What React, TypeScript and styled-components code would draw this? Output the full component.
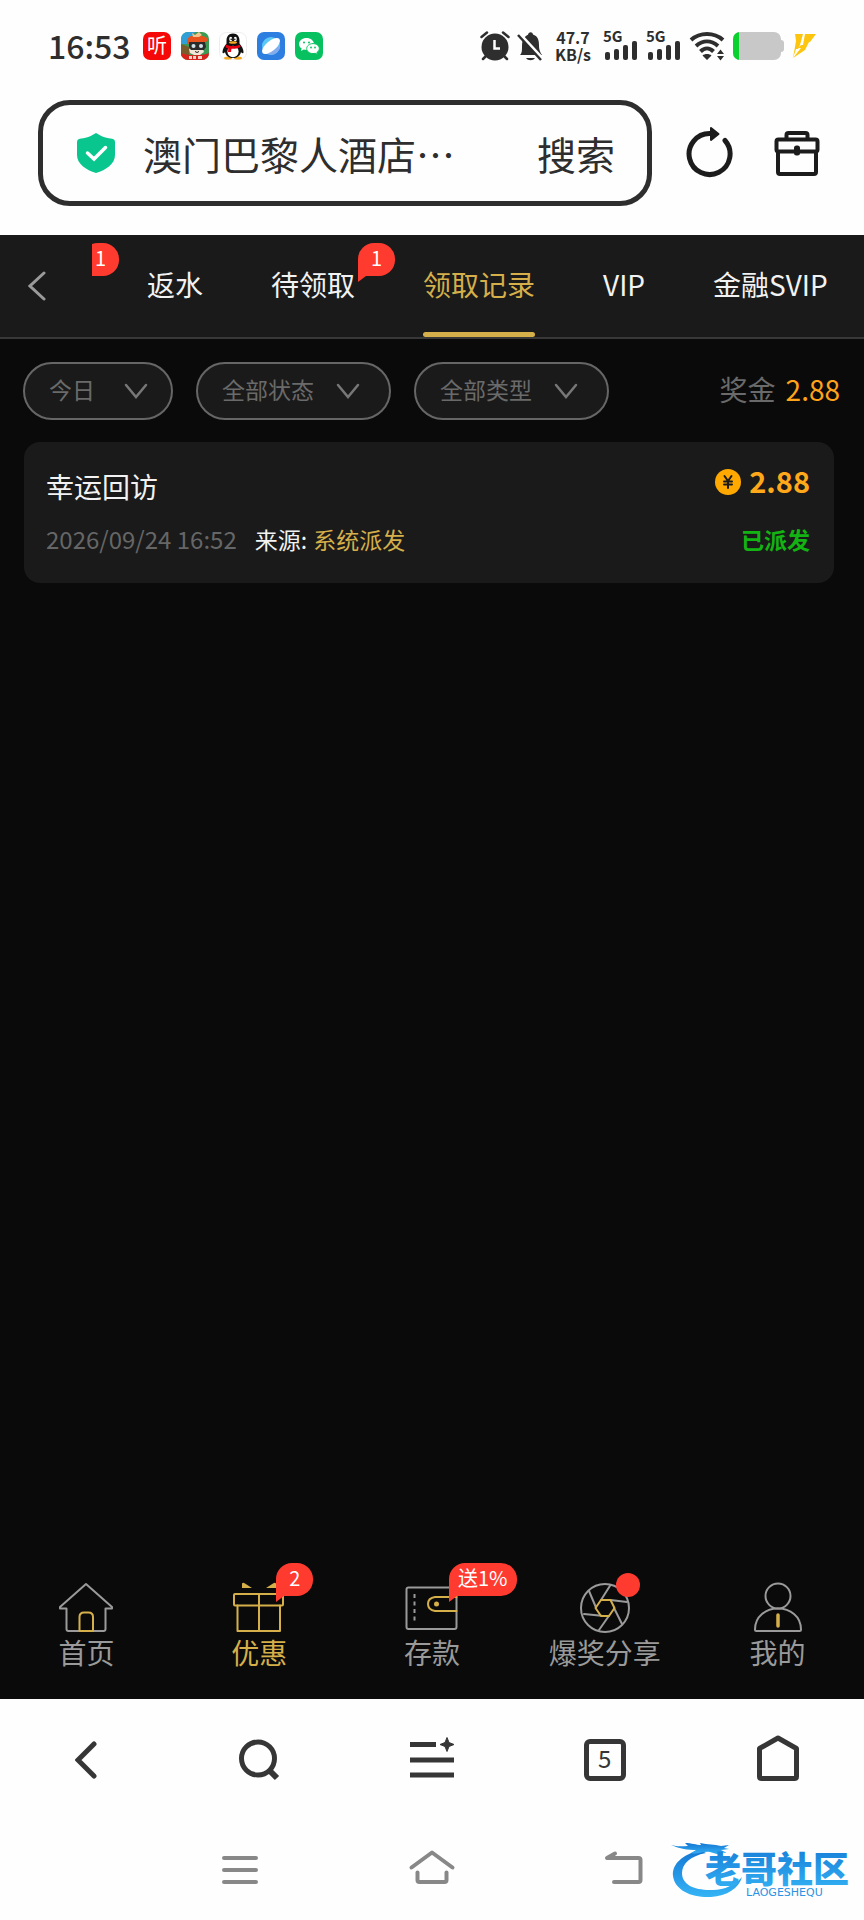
import React from "react";
import styled, { createGlobalStyle, css } from "styled-components";

const ink = "#2e2e2e";
const gold = "#d4af4a";
const grey = "#9a9a9a";
const red = "#ff3b30";

const GlobalStyle = createGlobalStyle`
  * { box-sizing: border-box; }
  body {
    margin: 0;
    background: #fefefe;
    font-family: "Noto Sans CJK SC", "Noto Sans", sans-serif;
  }
  button, input, select { font: inherit; color: inherit; }
  button { padding: 0; border: 0; background: none; cursor: pointer; }
  a { color: inherit; text-decoration: none; }
  svg { display: block; flex: none; }
`;

const Page = styled.div`
  position: relative;
  display: flex;
  flex-direction: column;
  min-height: 100vh;
`;

/* ---------- phone status bar ---------- */

const StatusBar = styled.header`
  display: flex;
  align-items: center;
  justify-content: space-between;
  height: 92px;
  padding: 0 48px;
  color: ${ink};
`;

const StatusGroup = styled.div<{ $gap: number }>`
  display: flex;
  align-items: center;
  gap: ${(p) => p.$gap}px;
`;

const Clock = styled.time`
  margin-right: 2px;
  padding-bottom: 2px;
  font-size: 32px;
  font-weight: 500;
  line-height: 32px;
`;

const Speed = styled.div`
  margin: 0 5px;
  font-size: 16px;
  font-weight: 700;
  line-height: 17px;
  text-align: center;
`;

/* ---------- browser address bar ---------- */

const AddressBar = styled.form`
  display: flex;
  align-items: center;
  padding: 8px 44px 29px 38px;
  color: ${ink};
`;

const AddressBox = styled.div`
  display: flex;
  flex: 1;
  align-items: center;
  min-width: 0;
  height: 106px;
  margin-right: 34px;
  padding: 0 32px 0 34px;
  border: 5px solid ${ink};
  border-radius: 32px;
  font-size: 39px;
`;

const AddressInput = styled.input`
  flex: 1;
  min-width: 0;
  height: 60px;
  padding: 0;
  margin-left: 28px;
  border: 0;
  outline: 0;
  background: none;
`;

const SearchButton = styled.button`
  height: 60px;
  line-height: 60px;
`;

const ToolboxButton = styled.button`
  margin-left: 40px;
`;

/* ---------- site tabs ---------- */

const TabBar = styled.nav`
  display: flex;
  height: 104px;
  border-bottom: 2px solid #383838;
  background: #1a1a1a;
  color: #f2f2f2;
`;

const BackButton = styled.button`
  display: flex;
  align-items: center;
  width: 92px;
  padding-left: 28px;
`;

const TabScroller = styled.div`
  flex: 1;
  min-width: 0;
  overflow: hidden;
`;

const TabList = styled.div`
  display: flex;
  gap: 68px;
  height: 100%;
  margin-left: -13px;
`;

const Tab = styled.a<{ $active?: boolean }>`
  position: relative;
  flex: none;
  font-size: 28px;
  line-height: 98px;
  white-space: nowrap;
  ${(p) =>
    p.$active &&
    css`
      color: ${gold};
      &::after {
        content: "";
        position: absolute;
        right: 0;
        bottom: 0;
        left: 0;
        height: 5px;
        border-radius: 3px;
        background: ${gold};
      }
    `}
`;

const Bubble = styled.span<{ $place: "tab" | "nav" }>`
  position: absolute;
  top: ${(p) => (p.$place === "tab" ? 8 : 0)}px;
  left: ${(p) => (p.$place === "tab" ? "calc(100% + 3px)" : "calc(50% + 17px)")};
  min-width: 37px;
  height: 33px;
  padding: 0 9px;
  border-radius: 16px 16px 16px 0;
  background: ${red};
  color: #fff;
  font-size: 20px;
  line-height: 30px;
  text-align: center;
  white-space: nowrap;
  &::after {
    content: "";
    position: absolute;
    top: 100%;
    left: 0;
    border-top: 6px solid ${red};
    border-right: 8px solid transparent;
  }
`;

/* ---------- records ---------- */

const Main = styled.main`
  flex: 1;
  background: #0a0a0a;
`;

const Filters = styled.div`
  display: flex;
  align-items: center;
  gap: 23px;
  padding: 23px 24px 22px 23px;
`;

const FilterPill = styled.div<{ $width: number }>`
  position: relative;
  flex: 0 1 ${(p) => p.$width}px;
  color: #6a6a6a;
`;

const FilterSelect = styled.select`
  display: block;
  width: 100%;
  height: 58px;
  padding: 0 24px 4px;
  border: 2px solid #666;
  border-radius: 29px;
  background: #1a1a1a;
  font-size: 23px;
  appearance: none;
`;

const FilterArrow = styled.svg<{ $inset: number }>`
  position: absolute;
  top: 21px;
  right: ${(p) => p.$inset}px;
  pointer-events: none;
`;

const Total = styled.p`
  margin: 0 0 0 auto;
  padding-bottom: 4px;
  color: #6a6a6a;
  font-size: 28px;
  line-height: 40px;
  white-space: nowrap;
`;

const TotalValue = styled.span`
  margin-left: 10px;
  color: #ffa31a;
`;

const Card = styled.article`
  display: grid;
  gap: 11px;
  margin: 0 30px 0 24px;
  padding: 20px 24px 24px 22px;
  border-radius: 16px;
  background: #1a1a1a;
`;

const CardRow = styled.div`
  display: flex;
  justify-content: space-between;
  color: #f2f2f2;
`;

const CardTitle = styled.h2`
  margin: 4px 0 2px;
  font-size: 28px;
  font-weight: 400;
  line-height: 40px;
`;

const Amount = styled.div`
  display: flex;
  align-items: center;
  gap: 8px;
  height: 40px;
  color: #ffa81a;
  font-size: 29px;
  font-weight: 700;
  line-height: 36px;
`;

const AmountValue = styled.span`
  padding-bottom: 4px;
`;

const Detail = styled.div`
  display: flex;
  font-size: 23px;
  line-height: 40px;
  white-space: nowrap;
`;

const Stamp = styled.time`
  margin-right: 18px;
  color: #666;
  font-size: 24px;
`;

const Source = styled.span`
  margin-left: 6px;
  color: ${gold};
`;

const State = styled.strong`
  color: #12b312;
  font-size: 23px;
  line-height: 40px;
`;

/* ---------- site bottom navigation ---------- */

const SiteNav = styled.nav`
  display: grid;
  grid-template-columns: repeat(5, 1fr);
  height: 136px;
  background: #0a0a0a;
`;

const SiteNavItem = styled.a<{ $active?: boolean }>`
  position: relative;
  display: flex;
  flex-direction: column;
  align-items: center;
  padding-top: 17px;
  color: ${(p) => (p.$active ? gold : grey)};
  font-size: 28px;
  line-height: 36px;
`;

const Dot = styled.span`
  position: absolute;
  top: 10px;
  left: calc(50% + 11px);
  width: 24px;
  height: 24px;
  border-radius: 50%;
  background: ${red};
`;

/* ---------- browser toolbar and system keys ---------- */

const Toolbar = styled.div`
  display: grid;
  grid-template-columns: repeat(5, 1fr);
  height: 121px;
  color: #363636;
`;

const ToolButton = styled.button`
  display: flex;
  align-items: center;
  justify-content: center;
`;

const TabCount = styled.span`
  width: 42px;
  height: 42px;
  border: 5px solid currentColor;
  border-radius: 6px;
  font-size: 24px;
  line-height: 28px;
`;

const SystemKeys = styled.div`
  display: flex;
  align-items: center;
  justify-content: center;
  gap: 144px;
  height: 100px;
  color: #888;
`;

const Watermark = styled.div`
  position: absolute;
  right: 13px;
  bottom: 19px;
  width: 180px;
  height: 60px;
`;

const lineArt = { fill: "none", strokeWidth: 2, strokeLinejoin: "round", strokeLinecap: "round" } as const;

const AppIcons = () => (
  <StatusGroup $gap={10}>
    <svg width="28" height="36" viewBox="0 -4 28 36">
      <rect width="28" height="28" rx="7" fill="#f40808" />
      <text x="14" y="21" textAnchor="middle" fontSize="20" fill="#fff">听</text>
    </svg>
    <svg width="28" height="28" viewBox="0 0 28 28">
      <clipPath id="game"><rect width="28" height="28" rx="7" /></clipPath>
      <g clipPath="url(#game)">
        <rect width="28" height="28" fill="#3b9a54" />
        <path d="M0 0h14L8 12H0z" fill="#2f9fd6" />
        <path d="M0 12l8 3v10H0z" fill="#7b5a2c" />
        <path d="M6 11C6 3 12 3 14 5c3-3 10-1 13 2l-3 5H7z" fill="#e8521c" />
        <path d="M11 1l3 2 4-3 3 3-3 2h-6z" fill="#f5c28a" />
        <path d="M8 17l6 1 8-1 1 3-4 3h-6l-4-2z" fill="#f4e6d8" />
        <path d="M8 10h16l1 5-2 3H10l-2-3z" fill="#2b2a2a" />
        <circle cx="12.500" cy="14" r="2" fill="#cfe2e8" />
        <circle cx="20" cy="14" r="2" fill="#cfe2e8" />
        <path d="M14 19.500l2 1 2-1" stroke="#222" fill="none" />
        <path d="M0 21c6 3 22 3 28 0v7H0z" fill="#d8201c" />
        <path d="M8 24h3v3H8zM12 24h3v3h-3zM17 24h4v3h-4z" fill="#f6d4c8" />
      </g>
    </svg>
    <svg width="28" height="28" viewBox="0 0 28 28">
      <rect x=".5" y=".5" width="27" height="27" rx="7" fill="#fff" stroke="#ededed" />
      <ellipse cx="9" cy="26" rx="4" ry="1.6" fill="#f7a823" />
      <ellipse cx="19" cy="26" rx="4" ry="1.6" fill="#f7a823" />
      <path d="M14 1.5c-4.500 0-6.500 3.300-6.500 7v3C5.500 14 3.500 17 3.500 20c0 2 1.500 1.500 2.500 0 1 4 4 6 8 6s7-2 8-6c1 1.500 2.500 2 2.500 0 0-3-2-6-4-8.500v-3c0-3.700-2-7-6.500-7z" fill="#111" />
      <ellipse cx="14" cy="19.500" rx="5.600" ry="5.700" fill="#fff" />
      <ellipse cx="11.700" cy="7" rx="1.500" ry="2.200" fill="#fff" />
      <ellipse cx="16.300" cy="7" rx="1.500" ry="2.200" fill="#fff" />
      <circle cx="12.200" cy="7.200" r=".8" /><circle cx="15.800" cy="7.200" r=".8" />
      <ellipse cx="14" cy="10.500" rx="4" ry="1.300" fill="#f7a823" />
      <path d="M7 12.500c4 2 10 2 14 0l.5 2.500c-3 1.500-6 2-9 1.800l-.5 3.200H9l.3-3.600-2.600-1z" fill="#e60012" />
    </svg>
    <svg width="28" height="28" viewBox="0 0 28 28">
      <rect width="28" height="28" rx="7" fill="#2c7fe0" />
      <circle cx="14" cy="14" r="9" fill="#5cc8f5" />
      <path d="M23 12a9 9 0 0 1-14 9c6-1 11-4 14-9z" fill="#86abec" />
      <ellipse cx="14" cy="14" rx="11" ry="5" fill="#fff" transform="rotate(-40 14 14)" />
    </svg>
    <svg width="28" height="28" viewBox="0 0 28 28">
      <rect width="28" height="28" rx="7" fill="#07c160" />
      <path d="M11.500 6C7.400 6 4 8.700 4 12c0 1.900 1 3.500 2.700 4.600L6 19l2.800-1.400c.9.300 1.800.4 2.700.4C15.600 18 19 15.300 19 12s-3.400-6-7.500-6z" fill="#fff" />
      <path d="M18 11.600c-3.500 0-6.300 2.200-6.300 5s2.800 5 6.300 5c.8 0 1.500-.1 2.200-.3l2.300 1.200-.6-2c1.400-.9 2.400-2.300 2.400-3.900 0-2.800-2.800-5-6.300-5z" fill="#fff" stroke="#07c160" strokeWidth="1" />
      <g fill="#07c160"><circle cx="9" cy="10.500" r="1" /><circle cx="14" cy="10.500" r="1" /><circle cx="16" cy="15.500" r=".9" /><circle cx="20" cy="15.500" r=".9" /></g>
    </svg>
  </StatusGroup>
);

const Signal = () => (
  <svg width="36" height="46" viewBox="0 -8 36 46" fill="currentColor">
    <text x="0" y="11" fontSize="15" fontWeight="700">5G</text>
    <rect x="2" y="21" width="5" height="8" rx="2" />
    <rect x="11" y="18" width="5" height="11" rx="2" />
    <rect x="20" y="14" width="5" height="15" rx="2" />
    <rect x="29" y="10" width="5" height="19" rx="2" />
  </svg>
);

const StatusIcons = () => (
  <StatusGroup $gap={7}>
    <svg width="30" height="30" viewBox="0 0 30 30" fill="none" stroke="currentColor" strokeLinecap="round">
      <circle cx="15" cy="16" r="13.500" fill="currentColor" stroke="none" />
      <path d="M1.500 6L7 1.500M28.500 6L23 1.500M6 25l-3 3M24 25l3 3" strokeWidth="2.500" />
      <path d="M14.500 9v8.500H20" stroke="#fff" strokeWidth="2.500" strokeLinecap="butt" />
    </svg>
    <svg width="26" height="30" viewBox="0 0 26 30">
      <path d="M3 24c2-2 2-4 2-9 0-6 2-9 6-11.200C11.400.300 15.600.300 16 3.500c4.500 1.500 6 5 6 10.500 0 5 1 7 3 10z" fill="currentColor" />
      <path d="M9 27h9c-2 3-7 3-9 0z" fill="currentColor" />
      <path d="M2 2l24 26" stroke="#fff" strokeWidth="3" />
      <path d="M1 4l23 25" stroke="currentColor" strokeWidth="2.500" />
    </svg>
    <Speed>47.7<br />KB/s</Speed>
    <Signal />
    <Signal />
    <svg width="37" height="30" viewBox="0 0 37 30" fill="none" stroke="currentColor" strokeWidth="4">
      <path d="M2 9C11 1 25 1 34 9M7 15c7-6 15-6 22 0M11.500 20.500c4-4 9-4 13 0" />
      <path d="M18 29l-4.500-4.500c2-2 7-2 9 0z M31.500 18.500l3.500 4.500h-7z M31.500 29.500l3.500-4.500h-7z" fill="currentColor" stroke="none" />
    </svg>
    <svg width="52" height="30" viewBox="0 0 52 30">
      <clipPath id="cell"><rect y="1" width="48" height="28" rx="7" /></clipPath>
      <rect x="44" y="9" width="7" height="12" rx="3" fill="#c8c8c8" />
      <g clipPath="url(#cell)">
        <rect y="1" width="48" height="28" fill="#c8c8c8" />
        <rect y="1" width="6" height="28" fill="#0bd12f" />
      </g>
    </svg>
    <svg width="24" height="26" viewBox="0 0 24 26">
      <path d="M3 1h8L8 12l-2 4h-2L1 25 4 8z" fill="#fdc50d" />
      <path d="M13 1h11l-6 8h-1l-4 8L1 25l8-10h-3l3-3h2z" fill="#fdc50d" />
    </svg>
  </StatusGroup>
);

const tabs: { label?: string; badge?: string; active?: boolean }[] = [
  { label: "返水" },
  { label: "待领取", badge: "1" },
  { label: "领取记录", active: true },
  { label: "VIP" },
  { label: "金融SVIP" },
];

const filters = [
  { name: "date", label: "今日", width: 150, inset: 25 },
  { name: "state", label: "全部状态", width: 195, inset: 31 },
  { name: "type", label: "全部类型", width: 195, inset: 31 },
];

const navItems: { label: string; badge?: string; dot?: boolean; active?: boolean; art: React.ReactNode }[] = [
  {
    label: "首页",
    art: (
      <>
        <path d="M28 4L2 27v1.500h6.500V49q0 2 2 2h35q2 0 2-2V28.500H54V27z" stroke={grey} />
        <path d="M21.500 51V37q0-4.500 4.500-4.500h4.500q4.500 0 4.500 4.500v14z" stroke={gold} />
      </>
    ),
  },
  {
    label: "优惠",
    badge: "2",
    active: true,
    art: (
      <g stroke={gold}>
        <rect x="3" y="14" width="49" height="11.500" rx="1" />
        <path d="M6.500 25.500V51h42.500V25.500M28 14v37" />
        <path d="M11 3.500q1-1.500 3 0L21 8H11zM45 3.500q-1-1.500-3 0L35 8h10z" fill={gold} stroke="none" />
      </g>
    ),
  },
  {
    label: "存款",
    badge: "送1%",
    art: (
      <>
        <rect x="2.500" y="7.500" width="50" height="41.500" rx="2" stroke={grey} />
        <path d="M10.500 14v28" stroke={grey} strokeDasharray="4 3.500" strokeLinecap="butt" />
        <path d="M52.500 17H31q-7 1-7 7t7 7h21.500" stroke={gold} />
        <circle cx="32.500" cy="24" r="2.500" fill={gold} stroke="none" />
      </>
    ),
  },
  {
    label: "爆奖分享",
    dot: true,
    art: (
      <>
        <circle cx="28" cy="28" r="24" stroke={grey} />
        <path d="M33.500 5L24 20M12 11l7 16.500M7 34l17.500 1.700M22 50l10-14.300M45 44L37 28M50 22l-16.500-2" stroke={grey} />
        <path d="M18.500 28l5.500-8h9.500l4 8-5.500 8h-8z" stroke={gold} />
      </>
    ),
  },
  {
    label: "我的",
    art: (
      <>
        <circle cx="28" cy="16" r="12.500" stroke={grey} />
        <path d="M5 49.500C5 36 16 28.500 28 28.500S51 36 51 49.500q0 1.500-1.500 1.500h-43Q5 51 5 49.500z" stroke={grey} />
        <path d="M28 35v11" stroke={gold} strokeWidth="3.500" />
      </>
    ),
  },
];

export default function App() {
  return (
    <Page>
      <GlobalStyle />
      <StatusBar>
        <StatusGroup $gap={10}>
          <Clock>16:53</Clock>
          <AppIcons />
        </StatusGroup>
        <StatusIcons />
      </StatusBar>

      <AddressBar onSubmit={(e) => e.preventDefault()}>
        <AddressBox>
          <svg width="38" height="40" viewBox="0 0 38 40">
            <path d="M19 0c6 4 11 5 17 6q2 .5 2 3v13c0 9-9 15-19 18C9 37 0 31 0 22V9q0-2.500 2-3c6-1 11-2 17-6z" fill="#09c68e" />
            <path d="M10.500 20l6.500 6L28.500 14.500" fill="none" stroke="#fff" strokeWidth="3.500" strokeLinecap="round" />
          </svg>
          <AddressInput aria-label="搜索" defaultValue="澳门巴黎人酒店…" />
          <SearchButton type="submit">搜索</SearchButton>
        </AddressBox>
        <button type="button" aria-label="reload">
          <svg width="48" height="58" viewBox="0 0 48 58" fill="none" stroke="#1c1c1c" strokeWidth="5" strokeLinecap="round">
            <path d="M39 16.500A20.500 20.500 0 1 1 24 9.500" />
            <path d="M25 4l7.500 6-7.500 6z" fill="#1c1c1c" strokeWidth="2" strokeLinejoin="round" />
          </svg>
        </button>
        <ToolboxButton type="button" aria-label="toolbox">
          <svg width="46" height="46" viewBox="0 0 46 46" fill="none" stroke="#1c1c1c" strokeWidth="4" strokeLinejoin="round">
            <path d="M12.500 9V5q0-2 2-2h17q2 0 2 2v4" />
            <rect x="2.500" y="9.500" width="41" height="12" rx="2" />
            <path d="M4 21.500V42q0 2 2 2h34q2 0 2-2V21.500" />
            <rect x="21.500" y="17" width="3" height="7" rx="1" fill="#1c1c1c" strokeWidth="3" />
          </svg>
        </ToolboxButton>
      </AddressBar>

      <TabBar>
        <BackButton aria-label="back">
          <svg width="20" height="30" viewBox="0 0 20 30" fill="none" stroke={grey} strokeWidth="3" strokeLinecap="round">
            <path d="M16 2L2 15l14 13" />
          </svg>
        </BackButton>
        <TabScroller>
          <TabList>
            <Tab as="span"><Bubble $place="tab">1</Bubble></Tab>
            {tabs.map((t) => (
              <Tab key={t.label} href="#" $active={t.active}>
                {t.label}
                {t.badge && <Bubble $place="tab">{t.badge}</Bubble>}
              </Tab>
            ))}
          </TabList>
        </TabScroller>
      </TabBar>

      <Main>
        <Filters>
          {filters.map((f) => (
            <FilterPill key={f.name} $width={f.width}>
              <FilterSelect name={f.name} aria-label={f.label}>
                <option>{f.label}</option>
              </FilterSelect>
              <FilterArrow $inset={f.inset} width="24" height="16" viewBox="0 0 24 16" fill="none" stroke="#777" strokeWidth="2.500" strokeLinecap="round">
                <path d="M2 2l10 12L22 2" />
              </FilterArrow>
            </FilterPill>
          ))}
          <Total>奖金<TotalValue>2.88</TotalValue></Total>
        </Filters>
        <Card>
          <CardRow>
            <CardTitle>幸运回访</CardTitle>
            <Amount>
              <svg width="26" height="26" viewBox="0 0 26 26">
                <circle cx="13" cy="13" r="13" fill="#ffa800" />
                <path d="M9.500 7l3.500 5 3.500-5M13 12v7M9 12.500h8M9 15.500h8" fill="none" stroke="#1a1a1a" strokeWidth="2" strokeLinecap="round" />
              </svg>
              <AmountValue>2.88</AmountValue>
            </Amount>
          </CardRow>
          <CardRow>
            <Detail>
              <Stamp>2026/09/24 16:52</Stamp>
              来源:<Source>系统派发</Source>
            </Detail>
            <State>已派发</State>
          </CardRow>
        </Card>
      </Main>

      <SiteNav>
        {navItems.map((n) => (
          <SiteNavItem key={n.label} href="#" $active={n.active}>
            <svg width="56" height="54" viewBox="0 0 56 54" {...lineArt}>{n.art}</svg>
            {n.label}
            {n.badge && <Bubble $place="nav">{n.badge}</Bubble>}
            {n.dot && <Dot />}
          </SiteNavItem>
        ))}
      </SiteNav>

      <Toolbar>
        <ToolButton aria-label="previous page">
          <svg width="22" height="40" viewBox="0 0 22 40" fill="none" stroke="currentColor" strokeWidth="5" strokeLinecap="round">
            <path d="M19 4L3 20l16 16" />
          </svg>
        </ToolButton>
        <ToolButton aria-label="search">
          <svg width="42" height="42" viewBox="0 0 42 42" fill="none" stroke="currentColor" strokeWidth="5">
            <circle cx="20" cy="19.500" r="16.500" />
            <path d="M32 32l7 7" strokeWidth="6" />
          </svg>
        </ToolButton>
        <ToolButton aria-label="menu">
          <svg width="46" height="46" viewBox="0 0 46 46" fill="none" stroke="currentColor" strokeWidth="5">
            <path d="M1 7.500h26M1 23h44M1 38h44" />
            <path d="M38 .500l2 5 5 2-5 2-2 5-2-5-5-2 5-2z" fill="currentColor" strokeWidth="1" />
          </svg>
        </ToolButton>
        <ToolButton aria-label="tabs"><TabCount>5</TabCount></ToolButton>
        <ToolButton aria-label="home">
          <svg width="42" height="52" viewBox="0 0 42 52" fill="none" stroke="currentColor" strokeWidth="5" strokeLinejoin="round">
            <path d="M2.500 14.500L21 4l18.500 10.500v28q0 2-2 2h-33q-2 0-2-2z" />
          </svg>
        </ToolButton>
      </Toolbar>

      <SystemKeys>
        <ToolButton aria-label="recent apps">
          <svg width="48" height="40" viewBox="0 0 48 40" stroke="currentColor" strokeWidth="4" strokeLinecap="round">
            <path d="M8 8h32M8 20h32M8 32h32" />
          </svg>
        </ToolButton>
        <ToolButton aria-label="home screen">
          <svg width="48" height="40" viewBox="0 0 48 40" fill="none" stroke="currentColor" strokeWidth="4" strokeLinecap="round" strokeLinejoin="round">
            <path d="M3.500 17.500L24 2.500l20.500 15M9.500 22.500V30q0 2 2 2h25q2 0 2-2v-7.500" />
          </svg>
        </ToolButton>
        <ToolButton aria-label="go back">
          <svg width="48" height="40" viewBox="0 0 48 40" fill="none" stroke="currentColor" strokeWidth="4" strokeLinecap="round" strokeLinejoin="round">
            <path d="M15 3.500L7 8h31.500q2 0 2 2v20q0 2-2 2H14" />
          </svg>
        </ToolButton>
      </SystemKeys>

      <Watermark>
        <svg width="180" height="60" viewBox="0 0 180 60">
          <defs>
            <linearGradient id="sea" x1="0" y1="0" x2="0" y2="1">
              <stop offset="0" stopColor="#1477d4" />
              <stop offset="1" stopColor="#35b4f5" />
            </linearGradient>
          </defs>
          <path d="M29 9C11 14 1 23 2 35c2 15 20 22 38 21 16-1 28-9 31-20-7 8-19 14-32 13C22 49 11 43 11 32c0-9 8-17 24-20z" fill="url(#sea)" />
          <path d="M0 4c7 2 11 1 17 1l-3-3c7 0 11 2 16 2l-1-2c8 2 14 1 21 3l8-1-5 3 5 1-8 1 6 3-9-1 2 3-10-3c-7-1-13 3-19 1l5-3C17 9 9 8 0 4z" fill="url(#sea)" />
          <text x="34" y="42" fontSize="36" fontWeight="900" fill="url(#sea)">老哥社区</text>
          <text x="75" y="55" fontSize="11" fontFamily="DejaVu Sans, sans-serif" fill="#2a93e4">LAOGESHEQU</text>
        </svg>
      </Watermark>
    </Page>
  );
}
